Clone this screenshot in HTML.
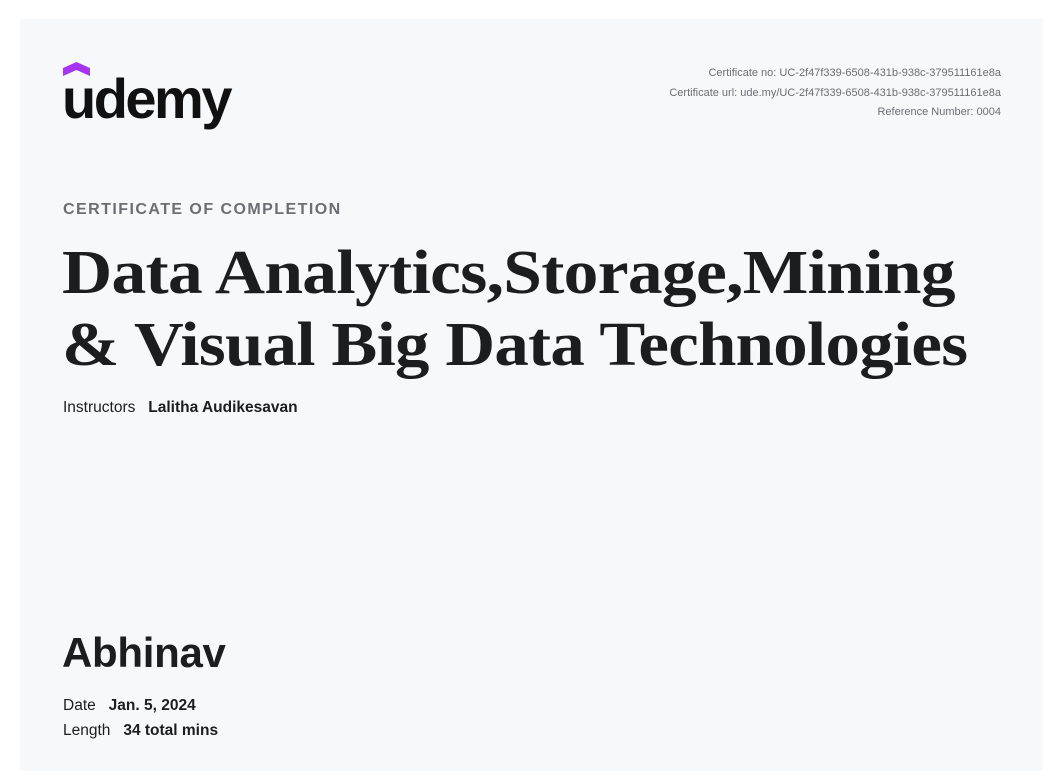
<!DOCTYPE html>
<html><head><meta charset="utf-8"><style>
html,body{margin:0;padding:0;background:#fff;}
body{width:1062px;height:784px;position:relative;overflow:hidden;font-family:"Liberation Sans",sans-serif;color:#1c1d1f;}
.card{position:absolute;left:20px;top:19px;width:1023px;height:752px;background:#f7f8fa;}
.abs{position:absolute;white-space:nowrap;}
.meta{right:42px;text-align:right;font-size:11px;color:#6a6f73;line-height:19.5px;top:45px;}
.logo{left:42px;top:47px;font-size:56px;font-weight:bold;letter-spacing:-2.5px;color:#111;}
.sub{left:43px;top:182px;font-size:16px;font-weight:bold;letter-spacing:1.45px;color:#6a6f73;}
.title{left:42px;top:218px;font-family:"Liberation Serif",serif;font-weight:bold;font-size:62px;line-height:72px;color:#1c1d1f;letter-spacing:-0.6px;}
.title span{display:inline-block;transform-origin:0 50%;}
.inst{left:43px;top:380px;font-size:15.5px;}
.name{left:42px;top:610px;font-size:42px;font-weight:bold;letter-spacing:-0.3px;}
.row{left:43px;font-size:15.5px;}
b{font-weight:bold;}
</style></head><body>
<div class="card">
<svg class="abs" style="left:43px;top:43px" width="27" height="15" viewBox="0 0 27 15"><path d="M0 6 L13.5 0 L27 6 L27 14 L13.5 8 L0 14 Z" fill="#a435f0"/></svg>
<div class="abs logo">udemy</div>
<div class="abs meta">Certificate no: UC-2f47f339-6508-431b-938c-379511161e8a<br>Certificate url: ude.my/UC-2f47f339-6508-431b-938c-379511161e8a<br>Reference Number: 0004</div>
<div class="abs sub">CERTIFICATE OF COMPLETION</div>
<div class="abs title"><span style="transform:scaleX(1.12)">Data Analytics,Storage,Mining</span><br><span style="transform:scaleX(1.11)">&amp; Visual Big Data Technologies</span></div>
<div class="abs inst">Instructors &nbsp;&nbsp;<b>Lalitha Audikesavan</b></div>
<div class="abs name">Abhinav</div>
<div class="abs row" style="top:678px">Date &nbsp;&nbsp;<b>Jan. 5, 2024</b></div>
<div class="abs row" style="top:703px">Length &nbsp;&nbsp;<b>34 total mins</b></div>
</div>
</body></html>
